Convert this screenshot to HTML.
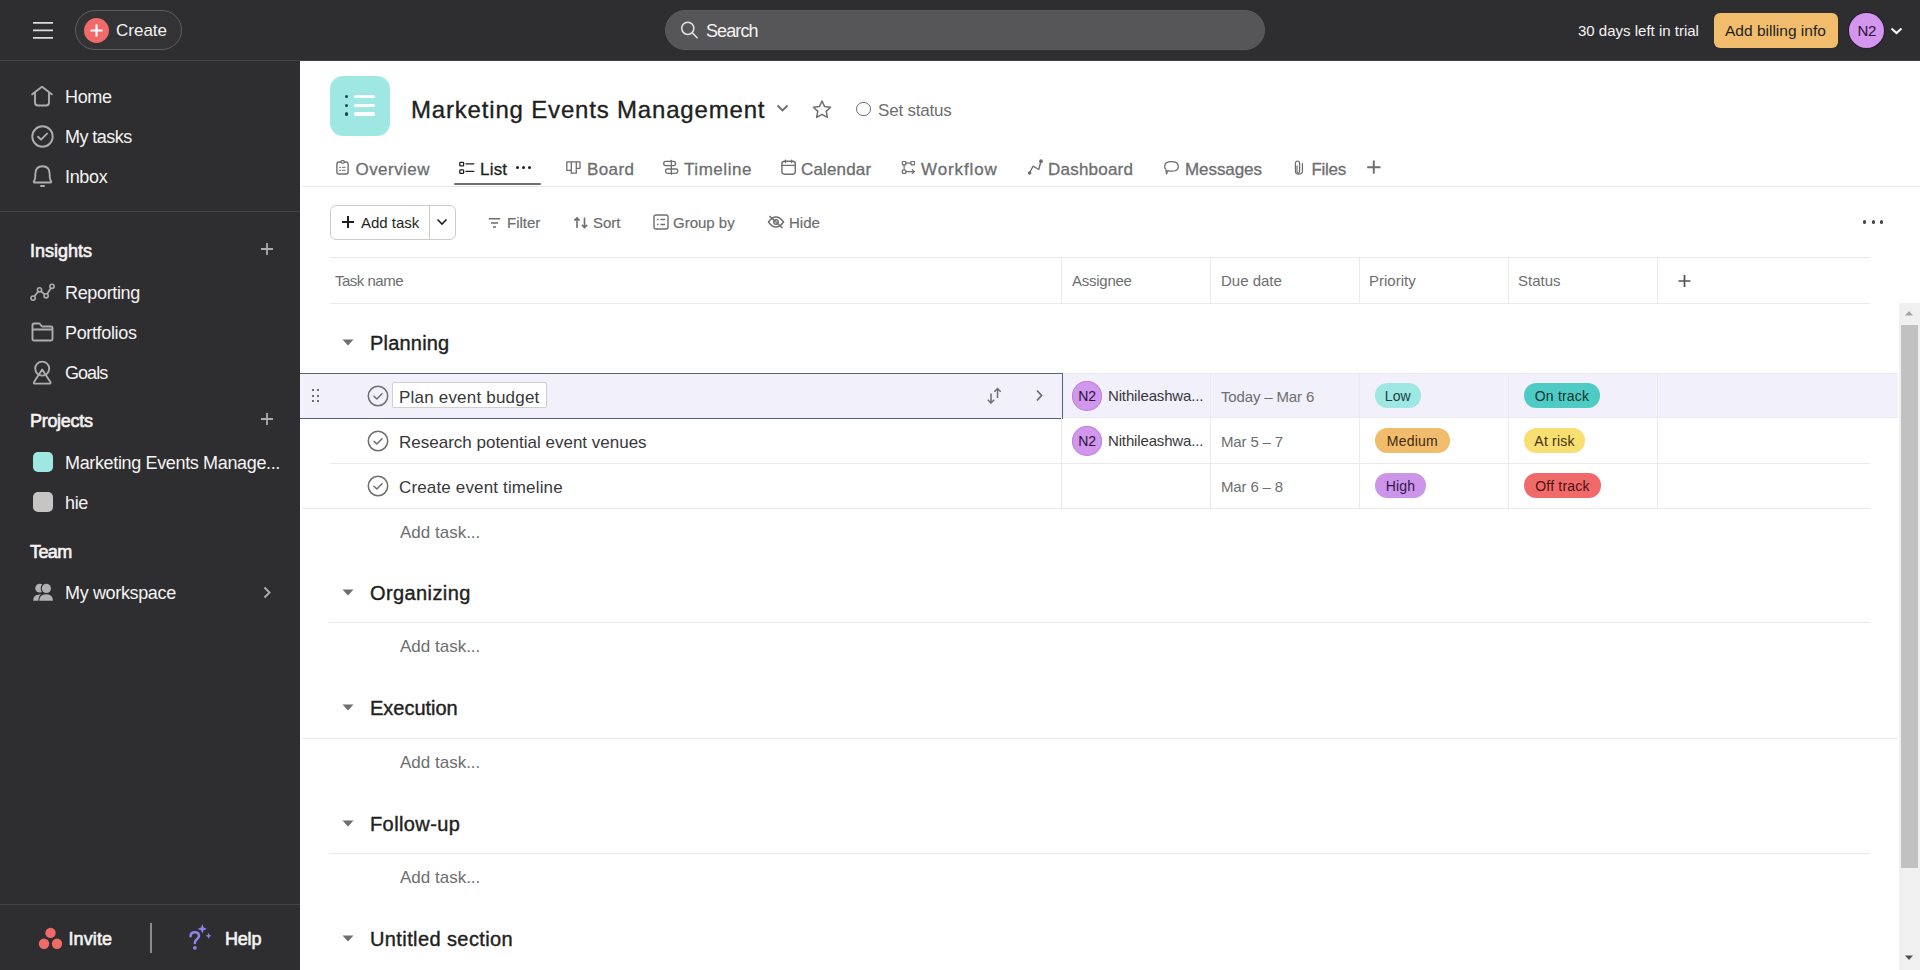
<!DOCTYPE html>
<html><head><meta charset="utf-8">
<style>
*{box-sizing:border-box;margin:0;padding:0}
html,body{width:1920px;height:970px;overflow:hidden;background:#fff;font-family:"Liberation Sans",sans-serif;color:#1e1f21}
.a{position:absolute;white-space:nowrap}
#top{position:absolute;left:0;top:0;width:1920px;height:61px;background:#2e2e30;border-bottom:1px solid #424244}
#side{position:absolute;left:0;top:61px;width:300px;height:909px;background:#2e2e30}
.sw{color:#f5f4f3}
#side .sw{letter-spacing:-0.35px}
.hl{position:absolute;height:1px;background:#424244}
.gl{position:absolute;height:1px;background:#eaeaea}
.vl{position:absolute;width:1px;background:#eaeaea}
.tab{position:absolute;top:158.5px;font-size:17px;color:#6d6e6f;line-height:22px;-webkit-text-stroke:0.3px #6d6e6f}
.pill{position:absolute;height:24.5px;border-radius:12.25px;font-size:14px;line-height:26px;text-align:center;letter-spacing:0.2px;color:#1e1f21}
.sec{font-size:20px;line-height:24px;letter-spacing:0.4px;-webkit-text-stroke:0.4px #1e1f21;color:#1e1f21}
.tk{font-size:17px;line-height:22px;color:#37383a}
.cell{font-size:15px;line-height:20px;color:#6d6e6f;letter-spacing:-0.15px}
.add{font-size:17px;line-height:22px;color:#6d6e6f}
.av{width:30px;height:30px;border-radius:50%;background:#d097ec;box-shadow:inset 0 0 0 1px #c084df;color:#2b1238;font-size:14px;line-height:30px;text-align:center;letter-spacing:-0.2px}
</style></head><body>
<div id="top">
  <!-- hamburger -->
  <svg class="a" style="left:32px;top:20px" width="22" height="20" viewBox="0 0 22 20"><path d="M1 2.9H21M1 10.4H21M1 17.9H21" stroke="#dcdcdc" stroke-width="1.6"/></svg>
  <div class="a" style="left:75px;top:10px;width:107px;height:40px;border:1.3px solid #5f5f61;border-radius:20px;background:#333335"></div>
  <div class="a" style="left:84px;top:18px;width:25px;height:25px;border-radius:50%;background:#f06a6a;color:#4a1212"></div>
  <svg class="a" style="left:88px;top:22px" width="17" height="17" viewBox="0 0 17 17"><path d="M8.5 2.5V14.5M2.5 8.5H14.5" stroke="#fff" stroke-width="2.1"/></svg>
  <div class="a sw" style="left:116px;top:20px;font-size:17px;line-height:22px">Create</div>
  <!-- search -->
  <div class="a" style="left:665px;top:10px;width:600px;height:40px;border-radius:20px;background:#565557;border:1px solid #5c5c5e"></div>
  <svg class="a" style="left:680px;top:21px" width="19" height="19" viewBox="0 0 19 19"><circle cx="7.8" cy="7.3" r="6.1" fill="none" stroke="#e6e6e6" stroke-width="1.5"/><path d="M12.2 11.8L17.6 17.2" stroke="#e6e6e6" stroke-width="1.6"/></svg>
  <div class="a sw" style="left:706px;top:19.5px;font-size:18px;line-height:22px;letter-spacing:-0.9px">Search</div>
  <div class="a sw" style="left:1578px;top:21px;font-size:15px;line-height:20px">30 days left in trial</div>
  <div class="a" style="left:1714px;top:13px;width:124px;height:35px;border-radius:6px;background:#f1bd6c;color:#3f2b0c"></div>
  <div class="a" style="left:1725px;top:20.5px;font-size:15.5px;line-height:20px;color:#1e1f21">Add billing info</div>
  <div class="a" style="left:1849px;top:13px;width:35px;height:35px;border-radius:50%;background:#d395ee;box-shadow:0 0 0 1px #2a1a30"></div>
  <div class="a" style="left:1857.5px;top:20.5px;font-size:15px;line-height:20px;letter-spacing:-0.3px;color:#2b1238">N2</div>
  <svg class="a" style="left:1890px;top:26.5px" width="13" height="8" viewBox="0 0 13 8"><path d="M1.5 1.5L6.5 6L11.5 1.5" fill="none" stroke="#f5f4f3" stroke-width="2.2"/></svg>
</div>
<div id="side">
  <!-- Home -->
  <svg class="a" style="left:30px;top:24px" width="24" height="22" viewBox="0 0 24 22"><path d="M2.2 9.3L12 1.8L21.8 9.3M5 7.5V17.5Q5 20.5 8 20.5H16Q19 20.5 19 17.5V7.5" fill="none" stroke="#aeacae" stroke-width="1.9" stroke-linejoin="round" stroke-linecap="round"/></svg>
  <div class="a sw" style="left:65px;top:25px;font-size:18px;line-height:22px">Home</div>
  <svg class="a" style="left:31px;top:64px" width="23" height="23" viewBox="0 0 23 23"><circle cx="11.5" cy="11.5" r="10.2" fill="none" stroke="#aeacae" stroke-width="1.9"/><path d="M7 11.8L10 14.6L16 8.6" fill="none" stroke="#aeacae" stroke-width="1.9" stroke-linecap="round" stroke-linejoin="round"/></svg>
  <div class="a sw" style="left:65px;top:65px;font-size:18px;line-height:22px;letter-spacing:-0.55px">My tasks</div>
  <svg class="a" style="left:31px;top:103px" width="23" height="25" viewBox="0 0 23 25"><path d="M3.6 18.5Q2.2 18.5 3 17.1Q4.3 15.2 4.3 12.6V10.3Q4.3 2.3 11.5 2.3Q18.7 2.3 18.7 10.3V12.6Q18.7 15.2 20 17.1Q20.8 18.5 19.4 18.5Z" fill="none" stroke="#aeacae" stroke-width="1.9" stroke-linejoin="round"/><path d="M10 22H13" stroke="#aeacae" stroke-width="2" stroke-linecap="round"/></svg>
  <div class="a sw" style="left:65px;top:105px;font-size:18px;line-height:22px">Inbox</div>
  <div class="hl" style="left:0;top:150px;width:300px"></div>
  <div class="a sw" style="left:30px;top:179px;font-size:18px;line-height:22px;letter-spacing:0px;-webkit-text-stroke:0.6px #f5f4f3">Insights</div>
  <svg class="a" style="left:260px;top:181px" width="14" height="14" viewBox="0 0 14 14"><path d="M7 1V13M1 7H13" stroke="#aeacae" stroke-width="1.8"/></svg>
  <svg class="a" style="left:30px;top:220px" width="26" height="21" viewBox="0 -1 26 21"><path d="M3.1 16.1L9.5 7.8L16.1 13.8L22 4.3" fill="none" stroke="#aeacae" stroke-width="1.7"/><circle cx="3.1" cy="16.1" r="2.1" fill="#2e2e30" stroke="#aeacae" stroke-width="1.6"/><circle cx="9.5" cy="7.8" r="2.1" fill="#2e2e30" stroke="#aeacae" stroke-width="1.6"/><circle cx="16.1" cy="13.8" r="2.1" fill="#2e2e30" stroke="#aeacae" stroke-width="1.6"/><circle cx="22" cy="4.3" r="2.1" fill="#2e2e30" stroke="#aeacae" stroke-width="1.6"/></svg>
  <div class="a sw" style="left:65px;top:221px;font-size:18px;line-height:22px">Reporting</div>
  <svg class="a" style="left:31px;top:261px" width="23" height="20" viewBox="0 0 23 20"><path d="M1.5 3Q1.5 1.5 3 1.5H8.5L11 4.5H20Q21.5 4.5 21.5 6V17Q21.5 18.5 20 18.5H3Q1.5 18.5 1.5 17Z M1.5 7.5H21.5" fill="none" stroke="#aeacae" stroke-width="1.9" stroke-linejoin="round"/></svg>
  <div class="a sw" style="left:65px;top:261px;font-size:18px;line-height:22px">Portfolios</div>
  <svg class="a" style="left:31px;top:299px" width="22" height="25" viewBox="0 0 22 25"><circle cx="11.2" cy="8.6" r="7" fill="none" stroke="#aeacae" stroke-width="1.9"/><path d="M11.2 9.5L3 22Q2.4 23.6 4 23.6H18.4Q20 23.6 19.4 22Z" fill="none" stroke="#aeacae" stroke-width="1.9" stroke-linejoin="round"/></svg>
  <div class="a sw" style="left:65px;top:301px;font-size:18px;line-height:22px;letter-spacing:-0.95px">Goals</div>
  <div class="a sw" style="left:30px;top:349px;font-size:18px;line-height:22px;letter-spacing:-0.3px;-webkit-text-stroke:0.6px #f5f4f3">Projects</div>
  <svg class="a" style="left:260px;top:351px" width="14" height="14" viewBox="0 0 14 14"><path d="M7 1V13M1 7H13" stroke="#aeacae" stroke-width="1.8"/></svg>
  <div class="a" style="left:33px;top:391px;width:20px;height:20px;border-radius:5px;background:#9ee7e3;color:#18403e"></div>
  <div class="a sw" style="left:65px;top:391px;font-size:18px;line-height:22px">Marketing Events Manage...</div>
  <div class="a" style="left:33px;top:431px;width:20px;height:20px;border-radius:5px;background:#c7c4c4"></div>
  <div class="a sw" style="left:65px;top:431px;font-size:18px;line-height:22px">hie</div>
  <div class="a sw" style="left:30px;top:479.5px;font-size:18px;line-height:22px;letter-spacing:-0.6px;-webkit-text-stroke:0.6px #f5f4f3">Team</div>
  <svg class="a" style="left:32px;top:520px" width="24" height="22" viewBox="0 0 24 22"><circle cx="7.7" cy="7.2" r="4.4" fill="#b2b0b2"/><path d="M1.2 19.8Q1.2 13.4 7.5 13.4H9V19.8Z" fill="#b2b0b2"/><circle cx="14.4" cy="7.4" r="4.6" fill="#b2b0b2" stroke="#2e2e30" stroke-width="2.2" paint-order="stroke"/><path d="M7.3 19.8Q7.3 13.2 14 13.2H14.6Q20.9 13.2 20.9 19.8Z" fill="#b2b0b2" stroke="#2e2e30" stroke-width="2.2" paint-order="stroke" stroke-linejoin="round"/></svg>
  <div class="a sw" style="left:65px;top:521px;font-size:18px;line-height:22px">My workspace</div>
  <svg class="a" style="left:263px;top:525px" width="8" height="13" viewBox="0 0 8 13"><path d="M1.5 1.5L6.5 6.5L1.5 11.5" fill="none" stroke="#aeacae" stroke-width="1.9"/></svg>
  <div class="hl" style="left:0;top:843px;width:300px"></div>
  <svg class="a" style="left:38px;top:865px" width="25" height="24" viewBox="0 0 25 24"><circle cx="12.5" cy="6.9" r="5.2" fill="#f06a6a"/><circle cx="6" cy="17.7" r="5.2" fill="#f06a6a"/><circle cx="19" cy="17.7" r="5.2" fill="#f06a6a"/></svg>
  <div class="a sw" style="left:68.5px;top:867px;font-size:18px;line-height:22px;letter-spacing:0.1px;-webkit-text-stroke:0.6px #f5f4f3">Invite</div>
  <div class="a" style="left:150px;top:862px;width:1.5px;height:30px;background:#8a8a8c"></div>
  <svg class="a" style="left:187px;top:860px" width="28" height="30" viewBox="0 0 28 30"><path d="M3.6 15.2Q3.6 11.3 7.8 11.3Q12 11.3 12 14.8Q12 17 9.8 18.4Q7.9 19.5 7.9 22" fill="none" stroke="#8d83e8" stroke-width="2.6" stroke-linecap="round"/><circle cx="7.9" cy="26.8" r="1.9" fill="#8d83e8"/><path d="M15.3 3.2L16.6 6.6L20 7.9L16.6 9.2L15.3 12.6L14 9.2L10.6 7.9L14 6.6Z" fill="#8d83e8"/><path d="M21.6 11.8L22.5 13.9L24.6 14.8L22.5 15.7L21.6 17.8L20.7 15.7L18.6 14.8L20.7 13.9Z" fill="#8d83e8"/></svg>
  <div class="a sw" style="left:225px;top:867px;font-size:18px;line-height:22px;letter-spacing:-0.2px;-webkit-text-stroke:0.6px #f5f4f3">Help</div>
</div>
<div id="main">
  <!-- project header -->
  <div class="a" style="left:330px;top:76px;width:60px;height:60px;border-radius:13px;background:#9ee7e3;color:#18403e"></div>
  <div class="a" style="left:344.6px;top:94.6px;width:3.6px;height:3.6px;border-radius:50%;background:#1f4546"></div>
  <div class="a" style="left:344.6px;top:103.6px;width:3.6px;height:3.6px;border-radius:50%;background:#1f4546"></div>
  <div class="a" style="left:344.6px;top:112.1px;width:3.6px;height:3.6px;border-radius:50%;background:#1f4546"></div>
  <div class="a" style="left:353.5px;top:94.7px;width:21.5px;height:3.6px;border-radius:1.8px;background:#fff"></div>
  <div class="a" style="left:353.5px;top:103.7px;width:21.5px;height:3.6px;border-radius:1.8px;background:#fff"></div>
  <div class="a" style="left:353.5px;top:112.2px;width:21.5px;height:3.6px;border-radius:1.8px;background:#fff"></div>
  <div class="a" style="left:411px;top:96.3px;font-size:24px;line-height:28px;letter-spacing:0.82px;-webkit-text-stroke:0.35px #1e1f21;color:#1e1f21">Marketing Events Management</div>
  <svg class="a" style="left:776px;top:104px" width="13" height="9" viewBox="0 0 13 9"><path d="M1.5 1.5L6.5 6.5L11.5 1.5" fill="none" stroke="#6d6e6f" stroke-width="1.8"/></svg>
  <svg class="a" style="left:811px;top:99px" width="22" height="21" viewBox="0 0 22 21"><path d="M11 2L13.6 7.6L19.6 8.3L15.2 12.4L16.4 18.4L11 15.4L5.6 18.4L6.8 12.4L2.4 8.3L8.4 7.6Z" fill="none" stroke="#6d6e6f" stroke-width="1.5" stroke-linejoin="round"/></svg>
  <div class="a" style="left:856px;top:101.5px;width:14.5px;height:14.5px;border-radius:50%;border:1.5px solid #6d6e6f"></div>
  <div class="a" style="left:878px;top:99.5px;font-size:17px;line-height:22px;letter-spacing:-0.2px;color:#6d6e6f">Set status</div>
  <!-- tabs -->
  <svg class="a" style="left:330px;top:155px" width="1060" height="25" viewBox="330 155 1060 25" fill="none" stroke="#6d6e6f" stroke-width="1.4" stroke-linejoin="round" stroke-linecap="round">
    <rect x="336.9" y="162" width="11.2" height="12" rx="2"/>
    <rect x="341" y="160.7" width="3.4" height="2.4" rx="1" fill="#fff" stroke-width="1.2"/>
    <path d="M339.6 167.3H340.6M339.6 170.3H340.6M342.4 167.3H345.2M342.4 170.3H345.2" stroke-width="1.1"/>
    <rect x="459.8" y="162.4" width="3.8" height="3.4" rx="0.6" stroke="#1e1f21" stroke-width="1.3"/>
    <rect x="459.8" y="169.9" width="3.8" height="3.4" rx="0.6" stroke="#1e1f21" stroke-width="1.3"/>
    <path d="M466 163.8H473.8M466 171.4H473.8" stroke="#1e1f21" stroke-width="1.3"/>
    <path d="M566.8 161.8H580V168.3H576.3V173.2H571.3V170.3H566.8Z M571.3 161.8V170.3M576.3 161.8V168.3" stroke-width="1.3"/>
    <rect x="663.7" y="161.4" width="11.9" height="4.2" rx="2.1" stroke-width="1.3"/><rect x="665.6" y="169" width="12.2" height="4.4" rx="1.8" stroke-width="1.3"/><path d="M671.3 160.3V174.3" stroke-width="1.3"/>
    <rect x="781.9" y="161.2" width="13.4" height="13" rx="2.6"/>
    <path d="M782 165.4H795.2M785.4 160.2V162.6M791.6 160.2V162.6"/>
    <rect x="902.3" y="161.5" width="3.6" height="3.3" rx="0.6" stroke-width="1.2"/>
    <rect x="910.9" y="161.5" width="3.6" height="3.3" rx="0.6" stroke-width="1.2"/>
    <rect x="902.3" y="170" width="3.6" height="3.3" rx="0.6" stroke-width="1.2"/>
    <path d="M905.9 163.2H910.9M904.1 164.8V170M905.9 171.6H914M912.2 169.6L914.4 171.6L912.2 173.6" stroke-width="1.2"/>
    <path d="M1029.6 173L1033 166.2L1038.8 169.5L1041 161"/>
    <circle cx="1029.6" cy="173" r="1.1" fill="#6d6e6f"/><circle cx="1041" cy="161.2" r="1.2" fill="#6d6e6f"/>
    <path d="M1171.5 161.6Q1178.3 161.6 1178.3 166.4Q1178.3 171.2 1171.5 171.2Q1169.5 171.2 1167.8 170.6L1166.5 174L1165.9 169.4Q1164.7 168.2 1164.7 166.4Q1164.7 161.6 1171.5 161.6Z" stroke-width="1.3"/>
    <path d="M1297 165.8V171.5Q1297 173 1298.3 173Q1299.6 173 1299.6 171.5V163.2Q1299.6 161 1297.8 161Q1295.4 161 1295.4 163.5V171Q1295.4 174.2 1298.5 174.2Q1302.4 174.2 1302.4 171V163.5" stroke-width="1.2" transform="translate(0,0)"/>
    <path d="M1373.8 160.5V173.8M1367.2 167.2H1380.5" stroke-width="1.9" stroke-linecap="butt"/>
  </svg>
  <div class="tab" style="left:355.5px;letter-spacing:0.45px">Overview</div>
  <div class="tab" style="left:480px;letter-spacing:0.2px;color:#1e1f21;-webkit-text-stroke:0.3px #1e1f21">List</div>
  <div class="a" style="left:516px;top:166px;width:3px;height:3px;border-radius:50%;background:#1e1f21"></div>
  <div class="a" style="left:522px;top:166px;width:3px;height:3px;border-radius:50%;background:#1e1f21"></div>
  <div class="a" style="left:528px;top:166px;width:3px;height:3px;border-radius:50%;background:#1e1f21"></div>
  <div class="a" style="left:454px;top:182.7px;width:87px;height:2.6px;border-radius:1.3px;background:#6d6e6f"></div>
  <div class="tab" style="left:587px;letter-spacing:0.4px">Board</div>
  <div class="tab" style="left:684px;letter-spacing:0.55px">Timeline</div>
  <div class="tab" style="left:801px;letter-spacing:0.15px">Calendar</div>
  <div class="tab" style="left:921px;letter-spacing:0.9px">Workflow</div>
  <div class="tab" style="left:1048px;letter-spacing:0.22px">Dashboard</div>
  <div class="tab" style="left:1185px;letter-spacing:-0.07px">Messages</div>
  <div class="tab" style="left:1311.5px;letter-spacing:-0.3px">Files</div>
  <div class="gl" style="left:303px;top:186px;width:1617px;background:#e8e8e8"></div>
  <!-- toolbar -->
  <div class="a" style="left:330px;top:205px;width:126px;height:35px;border:1px solid #cfcbcb;border-radius:6px"></div>
  <div class="a" style="left:429px;top:206px;width:1px;height:33px;background:#cfcbcb"></div>
  <svg class="a" style="left:341px;top:215px" width="14" height="14" viewBox="0 0 14 14"><path d="M7 1V13M1 7H13" stroke="#1e1f21" stroke-width="2"/></svg>
  <div class="a" style="left:361px;top:213px;font-size:15px;line-height:19px;color:#1e1f21">Add task</div>
  <svg class="a" style="left:436px;top:218px" width="12" height="8" viewBox="0 0 12 8"><path d="M1.5 1.5L6 6L10.5 1.5" fill="none" stroke="#1e1f21" stroke-width="1.6"/></svg>
  <svg class="a" style="left:488px;top:217px" width="13" height="12" viewBox="0 0 13 12"><path d="M0.8 1.8H12.2M3 5.9H10M5 10H8" stroke="#6d6e6f" stroke-width="1.5"/></svg>
  <div class="a" style="left:507px;top:213px;font-size:15px;line-height:19px;color:#6d6e6f;-webkit-text-stroke:0.2px #6d6e6f">Filter</div>
  <svg class="a" style="left:573px;top:216px" width="15" height="13" viewBox="0 0 15 13"><path d="M4 12V2M1.4 4.6L4 2L6.6 4.6M11.5 1.5V11.5M8.9 8.9L11.5 11.5L14.1 8.9" fill="none" stroke="#6d6e6f" stroke-width="1.6"/></svg>
  <div class="a" style="left:593px;top:213px;font-size:15px;line-height:19px;color:#6d6e6f;-webkit-text-stroke:0.2px #6d6e6f">Sort</div>
  <svg class="a" style="left:653px;top:214px" width="16" height="16" viewBox="0 0 16 16"><rect x="1" y="1" width="14" height="14" rx="2" fill="none" stroke="#6d6e6f" stroke-width="1.4"/><path d="M4 5.5H5.5M4 10.5H5.5M7.5 5.5H12M7.5 10.5H12" stroke="#6d6e6f" stroke-width="1.5"/></svg>
  <div class="a" style="left:673px;top:213px;font-size:15px;line-height:19px;color:#6d6e6f;-webkit-text-stroke:0.2px #6d6e6f">Group by</div>
  <svg class="a" style="left:767px;top:215px" width="18" height="14" viewBox="0 0 18 14"><path d="M1.5 7Q5 2 9 2Q13 2 16.5 7Q13 12 9 12Q5 12 1.5 7Z" fill="none" stroke="#6d6e6f" stroke-width="1.4"/><circle cx="9" cy="7" r="2.3" fill="none" stroke="#6d6e6f" stroke-width="1.4"/><path d="M2.5 1L15.5 13" stroke="#6d6e6f" stroke-width="1.5"/></svg>
  <div class="a" style="left:789px;top:213px;font-size:15px;line-height:19px;color:#6d6e6f;-webkit-text-stroke:0.2px #6d6e6f">Hide</div>
  <div class="a" style="left:1863.3px;top:220.4px;width:3.2px;height:3.2px;border-radius:50%;background:#444547"></div>
  <div class="a" style="left:1871.5px;top:220.4px;width:3.2px;height:3.2px;border-radius:50%;background:#444547"></div>
  <div class="a" style="left:1879.7px;top:220.4px;width:3.2px;height:3.2px;border-radius:50%;background:#444547"></div>
  <!-- table header -->
  <div class="gl" style="left:330px;top:257px;width:1540px"></div>
  <div class="gl" style="left:330px;top:303px;width:1540px"></div>
  <div class="vl" style="left:1061px;top:257px;height:47px"></div>
  <div class="vl" style="left:1210px;top:257px;height:47px"></div>
  <div class="vl" style="left:1359px;top:257px;height:47px"></div>
  <div class="vl" style="left:1508px;top:257px;height:47px"></div>
  <div class="vl" style="left:1657px;top:257px;height:47px"></div>
  <div class="a" style="left:335px;top:271px;font-size:15px;line-height:19px;letter-spacing:-0.5px;color:#6d6e6f">Task name</div>
  <div class="a" style="left:1072px;top:271px;font-size:15px;line-height:19px;letter-spacing:-0.25px;color:#6d6e6f">Assignee</div>
  <div class="a" style="left:1221px;top:271px;font-size:15px;line-height:19px;color:#6d6e6f">Due date</div>
  <div class="a" style="left:1369px;top:271px;font-size:15px;line-height:19px;color:#6d6e6f">Priority</div>
  <div class="a" style="left:1518px;top:271px;font-size:15px;line-height:19px;color:#6d6e6f">Status</div>
  <svg class="a" style="left:1677px;top:273.5px" width="14" height="14" viewBox="0 0 14 14"><path d="M7.5 1V13M1.5 7H13.5" stroke="#505153" stroke-width="1.7"/></svg>
  <!-- sections -->
  <svg class="a" style="left:342px;top:339px" width="12" height="7" viewBox="0 0 12 7"><path d="M0.5 0.5H11.5L6 6.5Z" fill="#6d6e6f"/></svg>
  <div class="a sec" style="left:370px;top:331px;letter-spacing:0.2px">Planning</div>
  <div class="a" style="left:300px;top:373px;width:1598px;height:45px;background:#f1f0fb"></div>
  <div class="a" style="left:1062px;top:373px;width:836px;height:1px;background:#eaeaef"></div>
  <div class="a" style="left:1062px;top:417px;width:836px;height:1px;background:#eaeaef"></div>
  <div class="a" style="left:300px;top:373px;width:763px;height:46px;border:1px solid #52647a;border-left:none"></div>
  <div class="a" style="left:312px;top:389px;width:2px;height:2px;background:#6d6e6f"></div>
  <div class="a" style="left:317px;top:389px;width:2px;height:2px;background:#6d6e6f"></div>
  <div class="a" style="left:312px;top:394.5px;width:2px;height:2px;background:#6d6e6f"></div>
  <div class="a" style="left:317px;top:394.5px;width:2px;height:2px;background:#6d6e6f"></div>
  <div class="a" style="left:312px;top:400px;width:2px;height:2px;background:#6d6e6f"></div>
  <div class="a" style="left:317px;top:400px;width:2px;height:2px;background:#6d6e6f"></div>
  <svg class="a" style="left:367px;top:385px" width="22" height="22" viewBox="0 0 22 22"><circle cx="11" cy="11" r="9.7" fill="none" stroke="#6d6e6f" stroke-width="1.5"/><path d="M7 11.3L9.8 14L15 8.8" fill="none" stroke="#6d6e6f" stroke-width="1.5" stroke-linecap="round" stroke-linejoin="round"/></svg>
  <div class="a" style="left:391.7px;top:382.3px;width:155px;height:26px;border:1px solid #d0d0d0;border-radius:2px;background:#fff"></div>
  <div class="a tk" style="left:399px;top:386.5px;letter-spacing:0.2px">Plan event budget</div>
  <svg class="a" style="left:986px;top:387px" width="17" height="17" viewBox="0 0 17 17"><path d="M5 6.5V16M1.8 12.8L5 16L8.2 12.8M11.5 11V1.5M8.3 4.7L11.5 1.5L14.7 4.7" fill="none" stroke="#6d6e6f" stroke-width="1.5"/></svg>
  <svg class="a" style="left:1035px;top:389px" width="9" height="13" viewBox="0 0 9 13"><path d="M2 1.5L6.5 6.5L2 11.5" fill="none" stroke="#6d6e6f" stroke-width="1.8"/></svg>
  <div class="vl" style="left:1210px;top:373px;height:135px"></div>
  <div class="vl" style="left:1359px;top:373px;height:135px"></div>
  <div class="vl" style="left:1508px;top:373px;height:135px"></div>
  <div class="vl" style="left:1657px;top:373px;height:135px"></div>
  <div class="vl" style="left:1061px;top:418px;height:90px"></div>
  <div class="a av" style="left:1072px;top:381px">N2</div>
  <div class="a cell" style="left:1108px;top:386px;color:#37383a">Nithileashwa...</div>
  <div class="a cell" style="left:1221px;top:387px">Today – Mar 6</div>
  <div class="a pill" style="left:1375px;top:383px;width:45.6px;background:#9ee7e3;color:#18403e">Low</div>
  <div class="a pill" style="left:1524px;top:383px;width:76px;background:#4ecbc4;color:#0f3532">On track</div>
  <svg class="a" style="left:367px;top:430px" width="22" height="22" viewBox="0 0 22 22"><circle cx="11" cy="11" r="9.7" fill="none" stroke="#6d6e6f" stroke-width="1.5"/><path d="M7 11.3L9.8 14L15 8.8" fill="none" stroke="#6d6e6f" stroke-width="1.5" stroke-linecap="round" stroke-linejoin="round"/></svg>
  <div class="a tk" style="left:399px;top:432px">Research potential event venues</div>
  <div class="a av" style="left:1072px;top:426px">N2</div>
  <div class="a cell" style="left:1108px;top:431px;color:#37383a">Nithileashwa...</div>
  <div class="a cell" style="left:1221px;top:432px">Mar 5 – 7</div>
  <div class="a pill" style="left:1375px;top:428px;width:74.6px;background:#f1bd6c;color:#3f2b0c">Medium</div>
  <div class="a pill" style="left:1524px;top:428px;width:61px;background:#f8df72;color:#3d320a">At risk</div>
  <div class="gl" style="left:330px;top:463px;width:1540px"></div>
  <svg class="a" style="left:367px;top:475px" width="22" height="22" viewBox="0 0 22 22"><circle cx="11" cy="11" r="9.7" fill="none" stroke="#6d6e6f" stroke-width="1.5"/><path d="M7 11.3L9.8 14L15 8.8" fill="none" stroke="#6d6e6f" stroke-width="1.5" stroke-linecap="round" stroke-linejoin="round"/></svg>
  <div class="a tk" style="left:399px;top:477px;letter-spacing:0.15px">Create event timeline</div>
  <div class="a cell" style="left:1221px;top:477px">Mar 6 – 8</div>
  <div class="a pill" style="left:1375px;top:473px;width:51px;background:#cd95ea;color:#35164a">High</div>
  <div class="a pill" style="left:1524px;top:473px;width:77px;background:#f06a6a;color:#4a1212">Off track</div>
  <div class="gl" style="left:303px;top:508px;width:1567px"></div>
  <div class="a add" style="left:400px;top:521.5px">Add task...</div>
  <svg class="a" style="left:342px;top:589px" width="12" height="7" viewBox="0 0 12 7"><path d="M0.5 0.5H11.5L6 6.5Z" fill="#6d6e6f"/></svg>
  <div class="a sec" style="left:370px;top:581px">Organizing</div>
  <div class="gl" style="left:329px;top:622px;width:1541px"></div>
  <div class="a add" style="left:400px;top:636.3px">Add task...</div>
  <svg class="a" style="left:342px;top:704px" width="12" height="7" viewBox="0 0 12 7"><path d="M0.5 0.5H11.5L6 6.5Z" fill="#6d6e6f"/></svg>
  <div class="a sec" style="left:370px;top:696px;letter-spacing:-0.02px">Execution</div>
  <div class="gl" style="left:303px;top:738px;width:1595px"></div>
  <div class="a add" style="left:400px;top:752.3px">Add task...</div>
  <svg class="a" style="left:342px;top:820px" width="12" height="7" viewBox="0 0 12 7"><path d="M0.5 0.5H11.5L6 6.5Z" fill="#6d6e6f"/></svg>
  <div class="a sec" style="left:370px;top:812px">Follow-up</div>
  <div class="gl" style="left:329px;top:853px;width:1541px"></div>
  <div class="a add" style="left:400px;top:867.3px">Add task...</div>
  <svg class="a" style="left:342px;top:935px" width="12" height="7" viewBox="0 0 12 7"><path d="M0.5 0.5H11.5L6 6.5Z" fill="#6d6e6f"/></svg>
  <div class="a sec" style="left:370px;top:927px">Untitled section</div>
  <!-- scrollbar -->
  <div class="a" style="left:1899px;top:303px;width:21px;height:667px;background:#f0f0f0"></div>
  <div class="a" style="left:1901px;top:325px;width:17px;height:543px;background:#c1c1c1"></div>
  <svg class="a" style="left:1904px;top:310px" width="10" height="6" viewBox="0 0 10 6"><path d="M1 5.5H9L5 1Z" fill="#a3a3a3"/></svg>
  <svg class="a" style="left:1904px;top:955px" width="10" height="6" viewBox="0 0 10 6"><path d="M1 0.5H9L5 5Z" fill="#505050"/></svg>
</div>
</body></html>
